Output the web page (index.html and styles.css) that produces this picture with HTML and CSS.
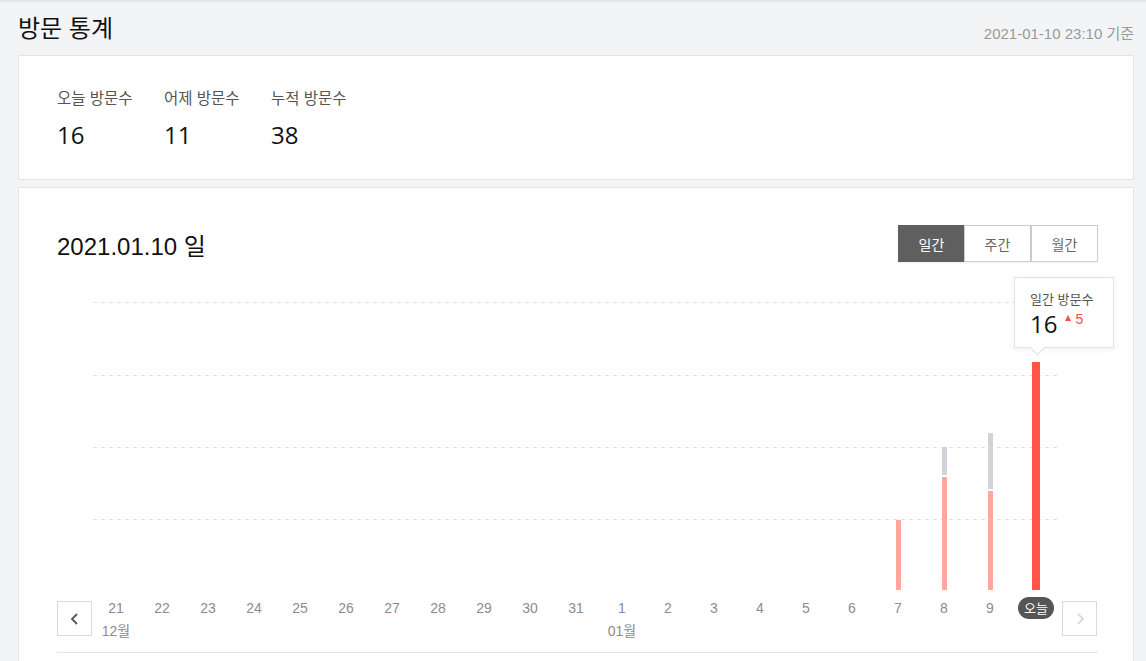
FILE: index.html
```html
<!DOCTYPE html>
<html lang="ko">
<head>
<meta charset="utf-8">
<title>방문 통계</title>
<link rel="stylesheet" href="styles.css">
</head>
<body>
<div class="page">
  <header class="top">
    <h1 class="title">방문 통계</h1>
    <span class="stamp">2021-01-10 23:10 기준</span>
  </header>

  <section class="card summary">
    <div class="stat"><div class="stat-label">오늘 방문수</div><div class="stat-value">16</div></div>
    <div class="stat"><div class="stat-label">어제 방문수</div><div class="stat-value">11</div></div>
    <div class="stat"><div class="stat-label">누적 방문수</div><div class="stat-value">38</div></div>
  </section>

  <section class="card chart-card">
    <div class="chart-head">
      <h2 class="chart-title">2021.01.10 일</h2>
      <div class="seg">
        <button class="seg-btn active">일간</button>
        <button class="seg-btn">주간</button>
        <button class="seg-btn">월간</button>
      </div>
    </div>

    <div class="plot">
      <div class="gridline g1"></div>
      <div class="gridline g2"></div>
      <div class="gridline g3"></div>
      <div class="gridline g4"></div>
      <div class="cols">
        <div class="col"></div><div class="col"></div><div class="col"></div><div class="col"></div>
        <div class="col"></div><div class="col"></div><div class="col"></div><div class="col"></div>
        <div class="col"></div><div class="col"></div><div class="col"></div><div class="col"></div>
        <div class="col"></div><div class="col"></div><div class="col"></div><div class="col"></div>
        <div class="col"></div>
        <div class="col"><div class="bar pink" style="height:70px"></div></div>
        <div class="col"><div class="bar gray" style="height:28px"></div><div class="bar pink" style="height:113px"></div></div>
        <div class="col"><div class="bar gray" style="height:56px"></div><div class="bar pink" style="height:99px"></div></div>
        <div class="col"><div class="bar red" style="height:228px"></div></div>
      </div>
      <div class="tip">
        <div class="tip-label">일간 방문수</div>
        <div class="tip-row"><span class="tip-num">16</span><span class="tip-delta"><i class="tri"></i>5</span></div>
      </div>
    </div>

    <div class="axis">
      <button class="nav prev" aria-label="이전">
        <svg width="12" height="14" viewBox="0 0 12 14"><polyline points="8,2 3,7 8,12" fill="none" stroke="#555" stroke-width="1.8"/></svg>
      </button>
      <div class="days">
        <div class="day"><span class="d">21</span><span class="m">12월</span></div>
        <div class="day"><span class="d">22</span></div>
        <div class="day"><span class="d">23</span></div>
        <div class="day"><span class="d">24</span></div>
        <div class="day"><span class="d">25</span></div>
        <div class="day"><span class="d">26</span></div>
        <div class="day"><span class="d">27</span></div>
        <div class="day"><span class="d">28</span></div>
        <div class="day"><span class="d">29</span></div>
        <div class="day"><span class="d">30</span></div>
        <div class="day"><span class="d">31</span></div>
        <div class="day"><span class="d">1</span><span class="m">01월</span></div>
        <div class="day"><span class="d">2</span></div>
        <div class="day"><span class="d">3</span></div>
        <div class="day"><span class="d">4</span></div>
        <div class="day"><span class="d">5</span></div>
        <div class="day"><span class="d">6</span></div>
        <div class="day"><span class="d">7</span></div>
        <div class="day"><span class="d">8</span></div>
        <div class="day"><span class="d">9</span></div>
        <div class="day"><span class="today">오늘</span></div>
      </div>
      <button class="nav next" aria-label="다음">
        <svg width="12" height="14" viewBox="0 0 12 14"><polyline points="4,2 9,7 4,12" fill="none" stroke="#d6d9de" stroke-width="1.8"/></svg>
      </button>
    </div>
    <div class="rule"></div>
  </section>
</div>
</body>
</html>
```

FILE: styles.css
```css
* { box-sizing: border-box; }
html, body { margin: 0; }
body {
  background: #f3f4f6;
  font-family: "Liberation Sans", "Noto Sans CJK KR", sans-serif;
  color: #111;
  overflow: hidden;
}
.page {
  border-top: 2px solid #e4e6ea;
  padding: 0 12px 0 18px;
}
.top {
  height: 53px;
  display: flex;
  align-items: center;
  justify-content: space-between;
}
.title {
  margin: 0;
  font-size: 24px;
  font-weight: 400;
  line-height: 30px;
  color: #111;
}
.stamp {
  font-size: 15px;
  color: #999;
  padding-top: 8px;
}
.card {
  background: #fff;
  border: 1px solid #e1e4e8;
}
.summary {
  display: flex;
  padding: 33px 38px 29px;
}
.stat { width: 107px; }
.stat-label {
  font-size: 15.5px;
  line-height: 20px;
  color: #555;
}
.stat-value {
  margin-top: 11px;
  font-family: "Open Sans", "Noto Sans CJK KR", sans-serif;
  font-size: 24px;
  line-height: 30px;
  color: #111;
}
.chart-card {
  margin-top: 7px;
  padding: 37px 35px 40px 38px;
}
.chart-head {
  display: flex;
  justify-content: space-between;
  align-items: flex-start;
  height: 37px;
}
.chart-title {
  margin: 7px 0 0;
  font-size: 24px;
  line-height: 30px;
  font-weight: 400;
  color: #111;
}
.seg { display: flex; }
.seg-btn {
  width: 67px;
  height: 37px;
  border: 1px solid #c9ced6;
  background: #fff;
  color: #666;
  font-family: "Noto Sans CJK KR", sans-serif;
  font-size: 14px;
  padding: 0;
  margin-left: -1px;
  box-shadow: 0 1px 2px rgba(0,0,0,0.06);
}
.seg-btn + .seg-btn + .seg-btn { margin-left: 0; }
.seg-btn.active {
  background: #5f5f5f;
  border-color: #5f5f5f;
  color: #fff;
  margin-left: 0;
}
.plot {
  position: relative;
  margin: 40px 0 0 36px;
  width: 966px;
  height: 288px;
}
.gridline {
  position: absolute;
  left: 0;
  width: 964px;
  height: 1px;
  background: repeating-linear-gradient(to right, #e3e3e3 0 4px, transparent 4px 8px);
}
.g1 { top: 0; }
.g2 { top: 73px; }
.g3 { top: 145px; }
.g4 { top: 217px; }
.cols {
  position: relative;
  display: flex;
  height: 100%;
  align-items: stretch;
}
.col {
  width: 46px;
  display: flex;
  flex-direction: column;
  align-items: center;
  justify-content: flex-end;
}
.bar { width: 5px; }
.bar.gray { background: #d0d4d9; margin-bottom: 2px; }
.bar.pink { background: #ffa69d; }
.bar.red { width: 8px; background: #ff5546; }
.tip {
  position: absolute;
  left: 921px;
  top: -25px;
  width: 100px;
  height: 71px;
  background: #fff;
  border: 1px solid #dfe2e6;
  box-shadow: 0 2px 6px rgba(0,0,0,0.06);
  padding: 13px 0 0 15px;
}
.tip::after {
  content: "";
  position: absolute;
  left: 17px;
  bottom: -6px;
  width: 10px;
  height: 10px;
  background: #fff;
  border-right: 1px solid #dfe2e6;
  border-bottom: 1px solid #dfe2e6;
  transform: rotate(45deg);
}
.tip-label {
  font-size: 13px;
  line-height: 18px;
  color: #555;
}
.tip-row {
  display: flex;
  align-items: flex-start;
  margin-top: 2px;
}
.tip-num {
  font-family: "Open Sans", sans-serif;
  font-size: 24px;
  line-height: 26px;
  color: #111;
}
.tip-delta {
  display: flex;
  align-items: center;
  margin-left: 8px;
  font-size: 14px;
  line-height: 16px;
  color: #ff4b3a;
}
.tri {
  display: inline-block;
  width: 0;
  height: 0;
  border-left: 3.5px solid transparent;
  border-right: 3.5px solid transparent;
  border-bottom: 6px solid #ff4b3a;
  margin-right: 4px;
  margin-top: -2px;
}
.axis {
  display: flex;
  align-items: flex-start;
  margin-top: 8px;
}
.nav {
  width: 35px;
  height: 35px;
  margin-top: 3px;
  border: 1px solid #d7dbe1;
  background: #fff;
  padding: 0;
  display: flex;
  align-items: center;
  justify-content: center;
}
.prev { margin-right: 1px; }
.next { margin-left: 3px; }
.days { display: flex; }
.day {
  width: 46px;
  display: flex;
  flex-direction: column;
  align-items: center;
}
.d {
  font-size: 14px;
  line-height: 20px;
  color: #8c8c8c;
}
.m {
  margin-top: 4px;
  font-size: 14px;
  line-height: 18px;
  color: #8c8c8c;
}
.today {
  margin-top: -1px;
  width: 36px;
  height: 22px;
  border-radius: 11px;
  background: #555;
  color: #fff;
  font-size: 13px;
  line-height: 22px;
  text-align: center;
  font-family: "Noto Sans CJK KR", sans-serif;
}
.rule {
  margin-top: 12px;
  height: 1px;
  background: #e3e5e8;
}
```
